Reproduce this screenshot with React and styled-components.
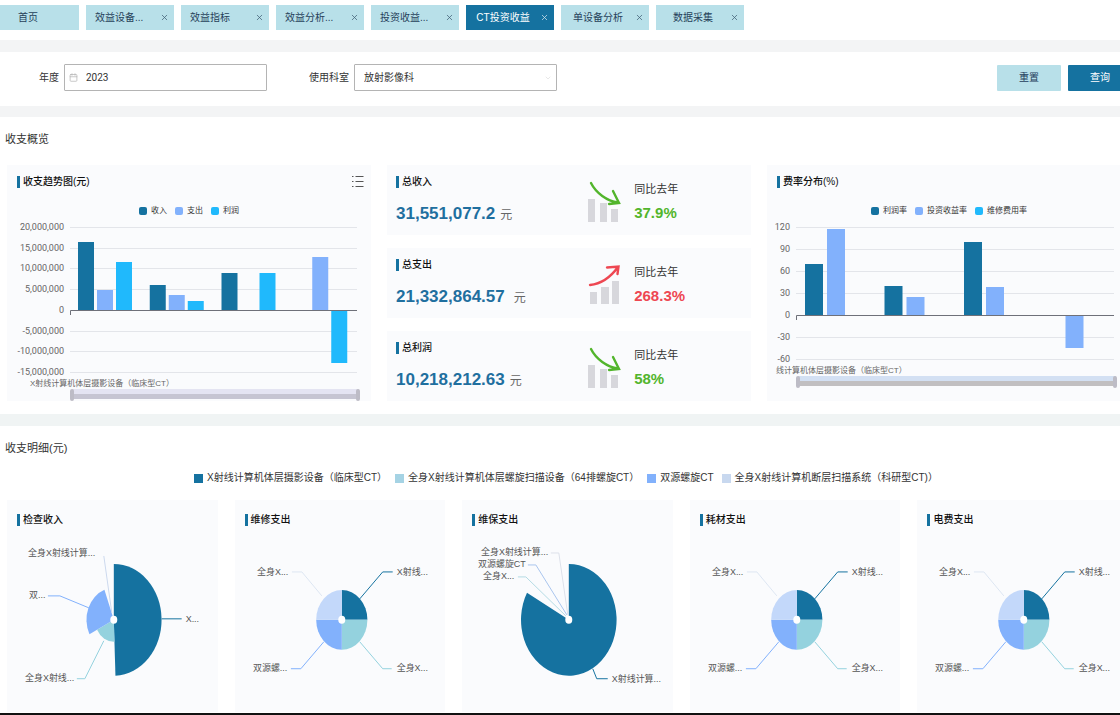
import styled, { createGlobalStyle } from 'styled-components';
import { useState } from 'react';
import { Calendar, ChevronDown, X } from 'lucide-react';

const COLORS = {
  primary: '#1572a0',
  soft: '#b8e0e9',
  blue: '#82b1fc',
  cyan: '#20b9fc',
  teal: '#94d2de',
  pale: '#c3d8fa',
  green: '#52b52c',
  red: '#ee4752',
  text: '#333',
  gray: '#666',
  line: '#e3e5ea',
  band: '#f3f4f5',
  card: '#fafbfd',
}

const TABS = [
  { id: 'home', label: '首页' },
  { id: 'device', label: '效益设备...', left: true },
  { id: 'index', label: '效益指标', left: true },
  { id: 'analysis', label: '效益分析...', left: true },
  { id: 'invest', label: '投资收益...', left: true },
  { id: 'ct', label: 'CT投资收益' },
  { id: 'single', label: '单设备分析' },
  { id: 'collect', label: '数据采集' },
]

const STATS = [
  { title: '总收入', value: '31,551,077.2', rate: '37.9%' },
  { title: '总支出', value: '21,332,864.57', rate: '268.3%', up: true },
  { title: '总利润', value: '10,218,212.63', rate: '58%' },
]

const TREND = {
  id: 'trend',
  left: 63,
  right: 350,
  top: 7,
  bottom: 152,
  barWidth: 16,
  barStep: 19,
  offset: 8,
  ticks: [20000000, 15000000, 10000000, 5000000, 0, -5000000, -10000000, -15000000],
  series: [
    { name: '收入', color: COLORS.primary, data: [16500000, 5900000, 9000000, 0] },
    { name: '支出', color: COLORS.blue, data: [4900000, 3600000, 0, 12800000] },
    { name: '利润', color: COLORS.cyan, data: [11500000, 2200000, 9000000, -12800000] },
  ],
  category: 'X射线计算机体层摄影设备（临床型CT）',
  categoryX: 23,
  categoryY: 166,
  zoomY: 169,
  zoomTop: '#e4e4f2',
  zoomBottom: '#c6c5d2',
}

const RATE = {
  id: 'rate',
  left: 29,
  right: 347,
  top: 7,
  bottom: 139,
  barWidth: 18,
  barStep: 22,
  offset: 9,
  ticks: [120, 90, 60, 30, 0, -30, -60],
  series: [
    { name: '利润率', color: COLORS.primary, data: [70, 39, 100, 0] },
    { name: '投资收益率', color: COLORS.blue, data: [117, 24, 38, -45] },
    { name: '维修费用率', color: COLORS.cyan, data: [0, 0, 0, 0] },
  ],
  category: '线计算机体层摄影设备（临床型CT）',
  categoryX: 9,
  categoryY: 153,
  zoomY: 156,
  zoomTop: '#d3e0f3',
  zoomBottom: '#c1bfc1',
}

const DEVICES = [
  { name: 'X射线计算机体层摄影设备（临床型CT）', color: COLORS.primary },
  { name: '全身X射线计算机体层螺旋扫描设备（64排螺旋CT）', color: '#a5d3e4' },
  { name: '双源螺旋CT', color: COLORS.blue },
  { name: '全身X射线计算机断层扫描系统（科研型CT)）', color: '#c8d8ef' },
]

const EVEN = {
  slices: [
    { from: 0, to: 90, r: 30, color: COLORS.primary },
    { from: 90, to: 180, r: 30, color: COLORS.teal },
    { from: 180, to: 270, r: 30, color: COLORS.blue },
    { from: 270, to: 360, r: 30, color: COLORS.pale },
  ],
  labels: [
    { text: 'X射线...', x: 162, y: 39, line: '125,66 148,39 158,39', color: COLORS.primary },
    { text: '全身X...', x: 162, y: 135, line: '125,109 148,136 157,136', color: COLORS.teal },
    { text: '双源螺...', x: 18, y: 135, line: '56,136 66,136 89,109', color: COLORS.blue },
    { text: '全身X...', x: 22, y: 39, line: '57,39 67,39 87,63', color: '#dde6f2' },
  ],
}

const PIES = [
  {
    title: '检查收入',
    slices: [
      { from: 0, to: 178, r: 56, color: COLORS.primary },
      { from: 178, to: 243, r: 22, color: COLORS.teal },
      { from: 243, to: 340, r: 32, color: COLORS.blue },
    ],
    labels: [
      { text: '全身X射线计算...', x: 21, y: 20, line: '97,23 105,80', color: '#ccd9ee' },
      { text: '双...', x: 22, y: 62, line: '41,63 53,63 82,75', color: COLORS.blue },
      { text: 'X...', x: 179, y: 86, line: '155,86 175,86', color: COLORS.primary },
      { text: '全身X射线...', x: 18, y: 145, line: '70,146 78,146 97,108', color: COLORS.teal },
    ],
  },
  { title: '维修支出', ...EVEN },
  {
    title: '维保支出',
    slices: [{ from: 0, to: 299, r: 56, color: COLORS.primary }],
    labels: [
      { text: '全身X射线计算...', x: 19, y: 19, line: '89,20 97,20 106,82', color: '#dde1ea' },
      { text: '双源螺旋CT', x: 16, y: 31, line: '66,32 74,32 105,82', color: '#a9c5ee' },
      { text: '全身X...', x: 21, y: 43, line: '56,44 64,44 104,83', color: '#b4dbe4' },
      { text: 'X射线计算...', x: 150, y: 146, line: '131,136 135,146 146,146', color: COLORS.primary },
    ],
  },
  { title: '耗材支出', ...EVEN },
  { title: '电费支出', ...EVEN },
]

const PIE_X = 107
const PIE_Y = 87
// pies are a bit narrower than tall
const PIE_RATIO = 0.855

function slicePath({ from, to, r }) {
  const rx = r * PIE_RATIO
  const point = (deg) => {
    const rad = (deg * Math.PI) / 180
    return `${PIE_X + rx * Math.sin(rad)} ${PIE_Y - r * Math.cos(rad)}`
  }
  const large = to - from > 180 ? 1 : 0
  return `M${PIE_X} ${PIE_Y} L${point(from)} A${rx} ${r} 0 ${large} 1 ${point(to)} Z`
}

function BarChart({ chart, title }) {
  const { left, right, top, bottom, ticks, series, zoomY } = chart
  const perUnit = (bottom - top) / (ticks[0] - ticks[ticks.length - 1])
  const toY = (value) => Math.round(top + (ticks[0] - value) * perUnit)
  const zero = toY(0)
  const group = (right - left) / 4

  return (
    <ChartSvg viewBox="0 0 364 181" role="img" aria-label={title}>
      {ticks.map((tick) => (
        <g key={tick}>
          {tick !== 0 && (
            <line x1={left} x2={right} y1={toY(tick) + 0.5} y2={toY(tick) + 0.5} stroke={COLORS.line} />
          )}
          <AxisText x={left - 6} y={toY(tick) + 3} textAnchor="end">{tick.toLocaleString('en-US')}</AxisText>
        </g>
      ))}
      {series.map((s, si) => s.data.map((value, i) => (
        <rect
          key={`${s.name}${i}`}
          x={left + i * group + chart.offset + si * chart.barStep}
          y={Math.min(zero, toY(value))}
          width={chart.barWidth}
          height={Math.abs(toY(value) - zero)}
          fill={s.color}
        />
      )))}
      <path d={`M${left + 0.5} ${zero + 5} V${zero + 0.5} H${right}`} fill="none" stroke="#6e7079" />
      <CategoryText x={chart.categoryX} y={chart.categoryY}>{chart.category}</CategoryText>
      <rect x={left + 2} y={zoomY} width={right - left} height="5" fill={chart.zoomTop} />
      <rect x={left + 2} y={zoomY + 5} width={right - left} height="5" fill={chart.zoomBottom} />
      <rect x={left} y={zoomY} width="4" height="12" rx="2" fill="#bdbcc6" />
      <rect x={right - 1} y={zoomY} width="4" height="12" rx="2" fill="#bdbcc6" />
    </ChartSvg>
  )
}

function PieChart({ title, slices, labels }) {
  return (
    <PieSvg viewBox="0 0 211 175" role="img" aria-label={title}>
      {slices.map((slice) => (
        <path key={slice.from} d={slicePath(slice)} fill={slice.color} />
      ))}
      {labels.map((label) => (
        <g key={label.line}>
          <polyline points={label.line} fill="none" stroke={label.color} />
          <PieText x={label.x} y={label.y + 3}>{label.text}</PieText>
        </g>
      ))}
      <ellipse cx={PIE_X} cy={PIE_Y} rx="3.5" ry="4" fill="#fff" />
    </PieSvg>
  )
}

function TrendIcon({ up }) {
  if (up) {
    return (
      <TrendSvg viewBox="0 0 34 44" aria-hidden="true">
        <path d="M3 29h7v12H3zM14 24h8v17h-8zM25 18h7v23h-7z" fill="#d7d7dc" />
        <path d="M3 22C13 21 23 15 31 4M20 4.500L31.500 3.500L30.500 11" fill="none" stroke={COLORS.red} strokeWidth="2.400" strokeLinecap="round" />
      </TrendSvg>
    )
  }
  return (
    <TrendSvg viewBox="0 0 34 44" aria-hidden="true">
      <path d="M1 19h7v23H1zM13 23h7v19h-7zM24 29h7v13h-7z" fill="#d7d7dc" />
      <path d="M4 3C9 13 20 21 31 22.500M26 11L32 23L22 24" fill="none" stroke={COLORS.green} strokeWidth="2.400" strokeLinecap="round" />
    </TrendSvg>
  )
}

function Legend({ items, large }) {
  return (
    <LegendList $large={large}>
      {items.map((item) => (
        <LegendItem key={item.name} $large={large} $color={item.color}>{item.name}</LegendItem>
      ))}
    </LegendList>
  )
}

export default function App() {
  const [active, setActive] = useState('ct')
  const [year, setYear] = useState('2023')

  return (
    <Page>
      <GlobalStyle />
      <Content>
        <TabBar>
          {TABS.map((tab) => (
            <Tab key={tab.id} $active={tab.id === active} $home={tab.id === 'home'}>
              <TabLabel type="button" $left={tab.left} $home={tab.id === 'home'} onClick={() => setActive(tab.id)}>
                {tab.label}
              </TabLabel>
              {tab.id !== 'home' && (
                <TabClose type="button" aria-label={`关闭${tab.label}`}><X size={9} /></TabClose>
              )}
            </Tab>
          ))}
        </TabBar>
        <Band />
        <Filter onSubmit={(e) => e.preventDefault()}>
          <Label htmlFor="year">年度</Label>
          <Field>
            <Calendar size={9} color="#b5b5b5" />
            <YearInput id="year" value={year} onChange={(e) => setYear(e.target.value)} />
          </Field>
          <Label htmlFor="dept" $next>使用科室</Label>
          <Field>
            <DeptSelect id="dept" defaultValue="放射影像科">
              <option>放射影像科</option>
            </DeptSelect>
            <ChevronDown size={8} color="#dcdcdc" />
          </Field>
          <Buttons>
            <Btn type="reset">重置</Btn>
            <Btn type="submit" $primary>查询</Btn>
          </Buttons>
        </Filter>
        <Band $thin />

        <Section>
          <SectionTitle>收支概览</SectionTitle>
          <OverviewGrid>
            <Card>
              <CardHead>
                <CardTitle>收支趋势图(元)</CardTitle>
                <ListButton type="button" aria-label="明细">
                  <svg width="12" height="13" viewBox="0 0 12 13" fill="none" stroke="#555">
                    <path d="M3.500 1.500H11.500M3.500 6.500H11.500M3.500 11.500H11.500M0 1.500H1.500M0 6.500H1.500M0 11.500H1.500" />
                  </svg>
                </ListButton>
              </CardHead>
              <Legend items={TREND.series} />
              <BarChart chart={TREND} title="收支趋势图" />
            </Card>
            <Stats>
              {STATS.map((stat) => (
                <StatCard key={stat.title}>
                  <div>
                    <CardTitle>{stat.title}</CardTitle>
                    <Amount $wide={stat.up}>{stat.value}<span>元</span></Amount>
                  </div>
                  <TrendIcon up={stat.up} />
                  <Compare>
                    同比去年
                    <Rate $up={stat.up}>{stat.rate}</Rate>
                  </Compare>
                </StatCard>
              ))}
            </Stats>
            <Card>
              <CardHead>
                <CardTitle>费率分布(%)</CardTitle>
              </CardHead>
              <Legend items={RATE.series} />
              <BarChart chart={RATE} title="费率分布" />
            </Card>
          </OverviewGrid>
        </Section>
        <Band $tint />

        <Section>
          <SectionTitle>收支明细(元)</SectionTitle>
          <Legend items={DEVICES} large />
          <PieGrid>
            {PIES.map((pie) => (
              <PieCard key={pie.title}>
                <CardTitle>{pie.title}</CardTitle>
                <PieChart {...pie} />
              </PieCard>
            ))}
          </PieGrid>
        </Section>
      </Content>
      <BottomLine />
    </Page>
  )
}

const GlobalStyle = createGlobalStyle`
  * {
    box-sizing: border-box;
  }
  body {
    margin: 0;
    background: #fff;
    color: ${COLORS.text};
    font-family: "Liberation Sans", "Noto Sans CJK SC", sans-serif;
    font-size: 10px;
    line-height: 14px;
  }
  button, input, select {
    font: inherit;
    color: inherit;
  }
  h2, h3, p, ul {
    margin: 0;
    padding: 0;
  }
`

const Page = styled.main`
  overflow-x: clip;
`

/* runs slightly past the right edge of the window */
const Content = styled.div`
  width: calc(100% + 12px);
`

const TabBar = styled.nav`
  display: flex;
  gap: 7px;
  padding: 5px 0 10px;
`

const Tab = styled.div`
  display: flex;
  flex: 0 1 ${props => props.$home ? '79px' : '88px'};
  height: 25px;
  color: ${props => props.$active ? '#fff' : '#26415a'};
  background: ${props => props.$active ? COLORS.primary : COLORS.soft};
`

const TabLabel = styled.button`
  flex: 1;
  padding: 0 0 0 ${props => props.$home ? '18px' : props.$left ? '9px' : '0'};
  border: none;
  background: none;
  text-align: ${props => props.$home || props.$left ? 'left' : 'center'};
  white-space: nowrap;
`

const TabClose = styled.button`
  display: flex;
  align-items: center;
  padding: 0 5px 0 0;
  border: none;
  background: none;
  opacity: 0.8;
`

const Band = styled.div`
  height: ${props => props.$thin ? '11px' : '12px'};
  background: ${props => props.$tint ? '#f0f4f4' : COLORS.band};
`

const Filter = styled.form`
  display: flex;
  align-items: center;
  padding: 12px 0 15px 39px;
`

const Label = styled.label`
  margin-left: ${props => props.$next ? '42px' : '0'};
  margin-right: 5px;
`

const Field = styled.div`
  display: flex;
  align-items: center;
  flex: 0 1 203px;
  height: 27px;
  padding: 0 4px;
  border: 1px solid #b4b4b4;
  border-radius: 1px;
`

const YearInput = styled.input`
  flex: 1;
  min-width: 0;
  margin-left: 8px;
  padding: 0;
  border: none;
  outline: none;
  background: none;
  font-family: Roboto, sans-serif;
`

const DeptSelect = styled.select`
  flex: 1;
  padding: 0 0 0 5px;
  border: none;
  outline: none;
  background: none;
  appearance: none;
`

const Buttons = styled.div`
  display: flex;
  gap: 7px;
  margin-left: auto;
`

const Btn = styled.button`
  width: 64px;
  height: 26px;
  padding: 0;
  border: none;
  border-radius: 1px;
  color: ${props => props.$primary ? '#fff' : '#1f3d5c'};
  background: ${props => props.$primary ? COLORS.primary : COLORS.soft};
`

const Section = styled.section`
  padding-top: 14px;
`

const SectionTitle = styled.h2`
  padding-left: 5px;
  font-size: 11px;
  font-weight: 400;
  line-height: 17px;
`

const OverviewGrid = styled.div`
  display: grid;
  grid-template-columns: repeat(3, 1fr);
  gap: 16px;
  padding: 17px 1px 13px 7px;
`

const Card = styled.article`
  background: ${COLORS.card};
`

const CardHead = styled.div`
  display: flex;
  justify-content: space-between;
  padding: 10px 7px 0 10px;
`

const CardTitle = styled.h3`
  display: flex;
  align-items: center;
  gap: 3px;
  font-size: 10px;
  font-weight: 500;
  line-height: 14px;
  color: #111;
  &::before {
    content: "";
    width: 3px;
    height: 12px;
    background: ${COLORS.primary};
  }
`

const ListButton = styled.button`
  display: flex;
  padding: 0;
  border: none;
  background: none;
`

const LegendList = styled.ul`
  display: flex;
  justify-content: center;
  gap: 8px;
  margin: ${props => props.$large ? '14px 0 0' : '15px 0 2px'};
  list-style: none;
`

const LegendItem = styled.li`
  display: flex;
  align-items: center;
  gap: 4px;
  font-size: ${props => props.$large ? '10px' : '8px'};
  white-space: nowrap;
  &::before {
    content: "";
    width: ${props => props.$large ? '9px' : '8px'};
    height: ${props => props.$large ? '9px' : '8px'};
    border-radius: ${props => props.$large ? '0' : '2px'};
    background: ${props => props.$color};
  }
`

const ChartSvg = styled.svg`
  display: block;
  width: 100%;
`

const AxisText = styled.text`
  font-family: Roboto, sans-serif;
  font-size: 9px;
  fill: ${COLORS.gray};
`

const CategoryText = styled.text`
  font-size: 8px;
  fill: ${COLORS.gray};
`

const Stats = styled.div`
  display: grid;
  gap: 13px;
`

const StatCard = styled.article`
  display: grid;
  grid-template-columns: 55% 47px 1fr;
  padding: 10px 0 0;
  background: ${COLORS.card};
  > div:first-child {
    padding-left: 9px;
  }
`

const Amount = styled.p`
  margin-top: 12px;
  color: #1f6f9f;
  font-size: 17px;
  font-weight: 700;
  line-height: 26px;
  span {
    margin-left: ${props => props.$wide ? '9px' : '5px'};
    color: ${COLORS.gray};
    font-size: 12px;
    font-weight: 400;
  }
`

const TrendSvg = styled.svg`
  width: 34px;
  height: 44px;
  margin-top: 5px;
`

const Compare = styled.div`
  padding-top: 6px;
  font-size: 11px;
  line-height: 16px;
`

const Rate = styled.p`
  color: ${props => props.$up ? COLORS.red : COLORS.green};
  font-size: 15px;
  font-weight: 700;
  line-height: 32px;
`

const PieGrid = styled.div`
  display: grid;
  grid-template-columns: repeat(5, 1fr);
  gap: 17px;
  padding: 15px 4px 1px 7px;
`

const PieCard = styled.article`
  padding: 13px 0 4px;
  background: ${COLORS.card};
  h3 {
    margin: 0 0 6px 10px;
  }
`

const PieSvg = styled.svg`
  display: block;
  width: 100%;
`

const PieText = styled.text`
  font-size: 9px;
  fill: #555;
`

const BottomLine = styled.div`
  height: 2px;
  background: #111;
`
